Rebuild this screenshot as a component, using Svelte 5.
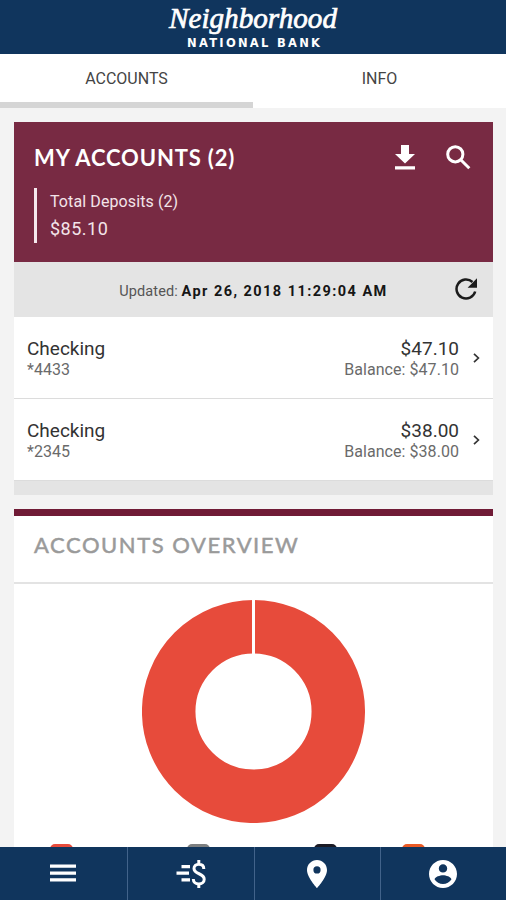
<script lang="ts">
  interface Account {
    name: string;
    mask: string;
    available: string;
    balance: string;
  }

  const tabs = ['ACCOUNTS', 'INFO'];
  let activeTab = $state('ACCOUNTS');

  const accounts: Account[] = [
    { name: 'Checking', mask: '*4433', available: '$47.10', balance: '$47.10' },
    { name: 'Checking', mask: '*2345', available: '$38.00', balance: '$38.00' }
  ];

  const legend = ['red', 'gray', 'black', 'orange'];
</script>

<div class="app">
  <header class="brand">
    <svg width="180" height="54" viewBox="0 0 180 54" role="img" aria-label="Neighborhood National Bank">
      <text class="brand-name" x="6" y="28" textLength="168" lengthAdjust="spacingAndGlyphs">Neighborhood</text>
      <text class="brand-sub" x="24" y="47" textLength="133" lengthAdjust="spacing">NATIONAL BANK</text>
    </svg>
  </header>

  <nav class="tabs">
    {#each tabs as tab}
      <button class="tab" class:active={activeTab === tab} onclick={() => (activeTab = tab)}>{tab}</button>
    {/each}
  </nav>

  <main class="content">
    <section class="card accounts">
      <div class="summary">
        <div class="summary-head">
          <h2>MY ACCOUNTS (2)</h2>
          <div class="actions">
            <svg class="download" viewBox="0 0 20 25">
              <path d="M6 0h8v9h6L10 18.5 0 9h6zM0 21.2h20v3.2H0z" />
            </svg>
            <svg class="search" viewBox="0 0 25 25">
              <circle cx="9.3" cy="9.3" r="7.6" />
              <path d="M15 15l8.3 8.3" />
            </svg>
          </div>
        </div>
        <div class="deposits">
          <span class="deposits-label">Total Deposits (2)</span>
          <span class="deposits-total">$85.10</span>
        </div>
      </div>

      <div class="updated">
        <p>Updated: <strong>Apr 26, 2018 11:29:04 AM</strong></p>
        <svg class="refresh" viewBox="0 0 24 24">
          <path class="arc" d="M21.2 13.500A9.500 9.500 0 1 1 18.500 4" />
          <path class="head" d="M23 .3v9.400h-9.400z" />
        </svg>
      </div>

      <ul class="account-list">
        {#each accounts as account}
          <li class="account">
            <div class="account-name">
              <span class="primary">{account.name}</span>
              <span class="secondary">{account.mask}</span>
            </div>
            <div class="account-amount">
              <span class="primary">{account.available}</span>
              <span class="secondary">Balance: {account.balance}</span>
            </div>
            <svg class="chevron" viewBox="0 0 7 10"><path d="M1 .8L5.4 5 1 9.2" /></svg>
          </li>
        {/each}
      </ul>
      <div class="card-foot"></div>
    </section>

    <section class="card overview">
      <h2>ACCOUNTS OVERVIEW</h2>
      <div class="chart">
        <svg class="donut" viewBox="0 0 224 224">
          <circle cx="111.5" cy="112.5" r="84.8" />
          <path d="M111.500 0v60" />
        </svg>
        <div class="legend">
          {#each legend as color}
            <span class="swatch {color}"></span>
          {/each}
        </div>
      </div>
    </section>
  </main>

  <nav class="bottom-nav">
    <button aria-label="Menu">
      <svg width="26" height="28" viewBox="0 0 26 28"><path d="M0 4.500h26v3.300H0zM0 11.400h26v3.300H0zM0 18.300h26v3.300H0z" /></svg>
    </button>
    <button aria-label="Payments">
      <svg width="30" height="28" viewBox="0 0 30 28">
        <path d="M5.500 5h8.500v3.300H5.500zM.5 11.500h12.500v3.300H.5zM5.500 18.200h8.500v3.300H5.500z" />
        <path class="dollar" d="M27.800 9c0-3-2-4.800-5-4.800-2.800 0-4.800 1.700-4.800 4.300 0 6.300 10.200 4.200 10.200 10.700 0 2.900-2.300 4.800-5.400 4.800s-5.500-2-5.500-5M22.800 0v4.500M22.800 23.500V28" />
      </svg>
    </button>
    <button aria-label="Locations">
      <svg width="20" height="28" viewBox="0 0 20 28">
        <path fill-rule="evenodd" d="M10 0C4.500 0 0 4.400 0 9.900 0 17.300 10 28 10 28s10-10.700 10-18.100C20 4.400 15.500 0 10 0zm0 13.500a3.600 3.600 0 1 1 0-7.200 3.600 3.600 0 0 1 0 7.200z" />
      </svg>
    </button>
    <button aria-label="Profile">
      <svg width="28" height="28" viewBox="2 2 20 20">
        <path d="M12 2C6.480 2 2 6.480 2 12s4.480 10 10 10 10-4.480 10-10S17.520 2 12 2zm0 3c1.660 0 3 1.340 3 3s-1.340 3-3 3-3-1.340-3-3 1.340-3 3-3zm0 14.200c-2.500 0-4.710-1.280-6-3.220.03-1.990 4-3.080 6-3.080 1.990 0 5.970 1.090 6 3.080-1.290 1.940-3.500 3.220-6 3.220z" />
      </svg>
    </button>
  </nav>
</div>

<style>
  :global(body) {
    background: #f3f3f3;
  }

  .app {
    display: flex;
    flex-direction: column;
    height: 900px;
    overflow: hidden;
    background: #f3f3f3;
    color: #333;
    font-family: Roboto, 'Liberation Sans', sans-serif;
  }

  h2,
  p,
  ul {
    margin: 0;
    padding: 0;
  }

  button {
    padding: 0;
    border: 0;
    background: none;
    font: inherit;
    color: inherit;
  }

  .brand {
    display: flex;
    justify-content: center;
    height: 54px;
    flex-shrink: 0;
    background: #10355d;
  }

  .brand text {
    fill: #fff;
  }

  .brand-name {
    font: italic 29px 'Liberation Serif', serif;
    stroke: #fff;
    stroke-width: 0.7px;
  }

  .brand-sub {
    font: bold 11.5px 'DejaVu Sans', sans-serif;
  }

  .tabs {
    display: flex;
    height: 54px;
    flex-shrink: 0;
    background: #fff;
  }

  .tab {
    flex: 1;
    box-sizing: border-box;
    padding-top: 1px;
    border-bottom: 6px solid transparent;
    font-size: 16px;
    color: #444;
  }

  .tab.active {
    border-bottom-color: #d5d5d5;
  }

  .content {
    flex: 1;
    min-height: 0;
    padding: 14px 13px 0 14px;
    overflow: hidden;
  }

  .card {
    background: #fff;
  }

  .summary {
    box-sizing: border-box;
    height: 140px;
    padding: 20px 22px 0 20px;
    background: #782a43;
    color: #fff;
  }

  .summary-head {
    display: flex;
    justify-content: space-between;
    align-items: center;
    height: 31px;
  }

  h2 {
    font-family: Lato, 'Open Sans', sans-serif;
    font-weight: 700;
    font-size: 22px;
    letter-spacing: 0.85px;
  }

  .actions {
    display: flex;
    gap: 31px;
  }

  .actions svg {
    height: 25px;
    fill: #fff;
  }

  .download {
    width: 20px;
  }

  .actions .search {
    width: 25px;
    fill: none;
    stroke: #fff;
    stroke-width: 3;
  }

  .deposits {
    display: flex;
    flex-direction: column;
    justify-content: space-between;
    box-sizing: border-box;
    height: 55px;
    margin-top: 15px;
    padding: 3px 0 2px 13px;
    border-left: 3px solid #f6e9ee;
    color: #f3e4e9;
  }

  .deposits-label {
    font-size: 16px;
    line-height: 22px;
    letter-spacing: 0.1px;
  }

  .deposits-total {
    font-size: 18px;
    line-height: 24px;
    letter-spacing: 0.5px;
  }

  .updated {
    display: flex;
    align-items: center;
    height: 55px;
    padding-right: 15px;
    background: #e4e4e4;
  }

  .updated p {
    flex: 1;
    padding: 3px 0 0 39px;
    font-size: 14.5px;
    letter-spacing: 0.1px;
    color: #555;
    text-align: center;
  }

  .updated strong {
    color: #161616;
    letter-spacing: 1.45px;
  }

  .refresh {
    width: 24px;
    height: 24px;
  }

  .arc {
    fill: none;
    stroke: #1c1c1c;
    stroke-width: 2.5;
  }

  .head {
    fill: #1c1c1c;
  }

  .account-list {
    list-style: none;
  }

  .account {
    display: flex;
    align-items: center;
    box-sizing: border-box;
    height: 82px;
    padding: 0 13px;
    border-bottom: 1px solid #dcdcdc;
  }

  .account-name,
  .account-amount {
    display: flex;
    flex-direction: column;
    padding-top: 3px;
  }

  .account-name {
    flex: 1;
  }

  .account-amount {
    align-items: flex-end;
  }

  .primary {
    font-size: 19px;
    line-height: 22px;
  }

  .secondary {
    font-size: 16px;
    line-height: 20px;
    letter-spacing: 0.05px;
    color: #6a6a6a;
  }

  .chevron {
    width: 7px;
    height: 10px;
    margin-left: 14px;
    fill: none;
    stroke: #333;
    stroke-width: 1.7;
  }

  .card-foot {
    height: 14px;
    background: #e4e4e4;
  }

  .overview {
    margin-top: 14px;
    border-top: 7px solid #701b36;
  }

  .overview h2 {
    box-sizing: border-box;
    height: 68px;
    padding: 14px 20px 0;
    border-bottom: 2px solid #e3e3e3;
    line-height: 30px;
    letter-spacing: 1.55px;
    font-weight: 400;
    -webkit-text-stroke: 0.5px #9a9a9a;
    color: #9a9a9a;
  }

  .chart {
    display: flex;
    flex-direction: column;
    align-items: center;
    height: 300px;
    padding-top: 15px;
  }

  .donut {
    width: 224px;
    height: 224px;
    fill: none;
  }

  .donut circle {
    stroke: #e74b3b;
    stroke-width: 53.5;
  }

  .donut path {
    stroke: #fff;
    stroke-width: 3;
  }

  .legend {
    display: grid;
    grid-template-columns: 137px 127px 88px 23px;
    align-self: stretch;
    margin-top: 21px;
    padding-left: 36px;
  }

  .swatch {
    width: 23px;
    height: 23px;
    border-radius: 5px;
  }

  .red {
    background: #e74b3b;
  }

  .gray {
    background: #7d7f80;
  }

  .black {
    background: #1b1b25;
  }

  .orange {
    background: #ea5a25;
  }

  .bottom-nav {
    display: grid;
    grid-template-columns: 128px 127px 126px 1fr;
    height: 53px;
    flex-shrink: 0;
    background: #10355d;
  }

  .bottom-nav button {
    display: flex;
    align-items: center;
    justify-content: center;
    padding-right: 1px;
    border-right: 1px solid #42638a;
  }

  .bottom-nav button:last-child {
    border-right: 0;
  }

  .bottom-nav svg {
    fill: #fff;
  }

  .bottom-nav .dollar {
    fill: none;
    stroke: #fff;
    stroke-width: 3;
  }
</style>
